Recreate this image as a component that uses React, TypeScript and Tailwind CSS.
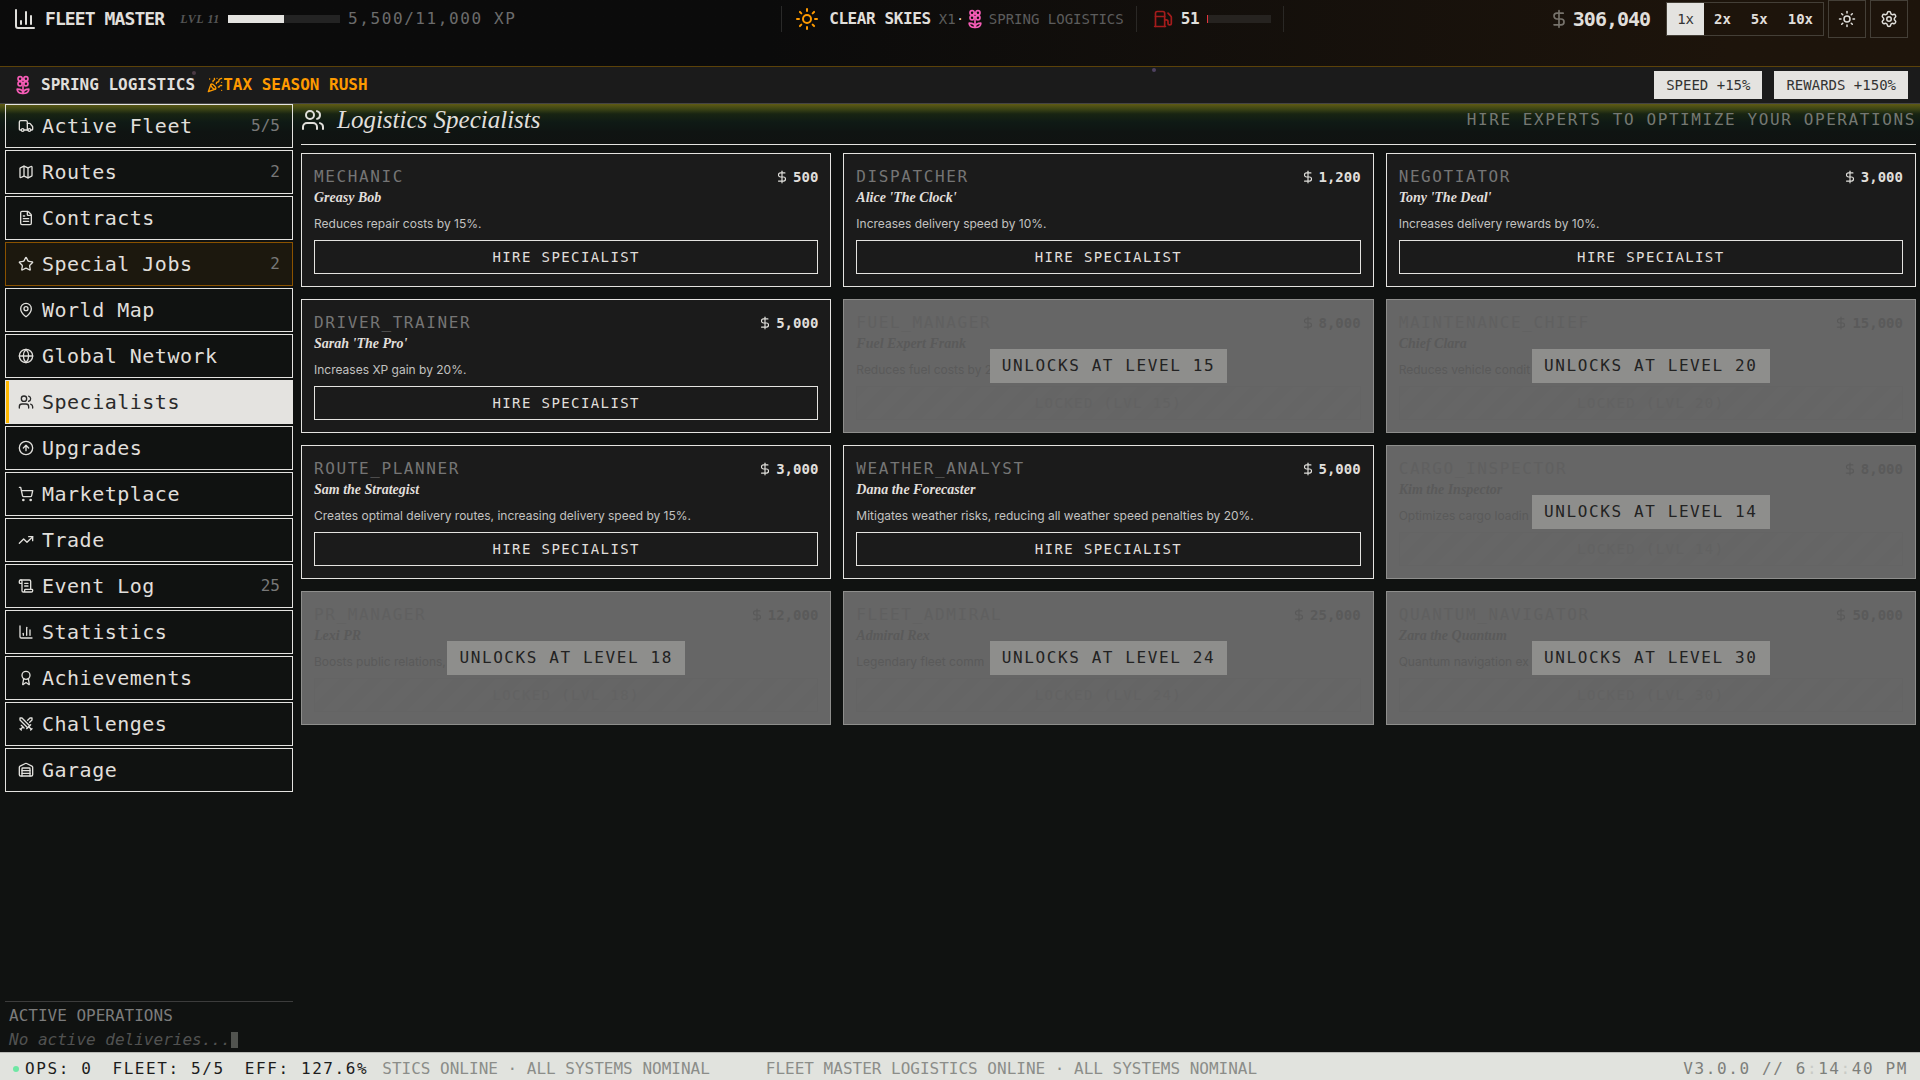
import {
    Award,
    ChartColumn,
    CircleArrowUp,
    DollarSign,
    FileText,
    Fuel,
    Globe,
    Map,
    MapPin,
    PartyPopper,
    ScrollText,
    Settings,
    ShoppingCart,
    Star,
    Sun,
    Swords,
    TrendingUp,
    Truck,
    Users,
    Warehouse,
    type LucideIcon,
} from "lucide-react";
import clsx from "clsx";

interface NavItem {
    label: string;
    icon: LucideIcon;
    count?: string;
    tone?: "special" | "active";
}

interface Specialist {
    role: string;
    name: string;
    cost: string;
    effect: string;
    unlockLevel?: number;
}

const NAV_ITEMS: NavItem[] = [
    { label: "Active Fleet", icon: Truck, count: "5/5" },
    { label: "Routes", icon: Map, count: "2" },
    { label: "Contracts", icon: FileText },
    { label: "Special Jobs", icon: Star, count: "2", tone: "special" },
    { label: "World Map", icon: MapPin },
    { label: "Global Network", icon: Globe },
    { label: "Specialists", icon: Users, tone: "active" },
    { label: "Upgrades", icon: CircleArrowUp },
    { label: "Marketplace", icon: ShoppingCart },
    { label: "Trade", icon: TrendingUp },
    { label: "Event Log", icon: ScrollText, count: "25" },
    { label: "Statistics", icon: ChartColumn },
    { label: "Achievements", icon: Award },
    { label: "Challenges", icon: Swords },
    { label: "Garage", icon: Warehouse },
];

const SPECIALISTS: Specialist[] = [
    { role: "MECHANIC", name: "Greasy Bob", cost: "500", effect: "Reduces repair costs by 15%." },
    { role: "DISPATCHER", name: "Alice 'The Clock'", cost: "1,200", effect: "Increases delivery speed by 10%." },
    { role: "NEGOTIATOR", name: "Tony 'The Deal'", cost: "3,000", effect: "Increases delivery rewards by 10%." },
    { role: "DRIVER_TRAINER", name: "Sarah 'The Pro'", cost: "5,000", effect: "Increases XP gain by 20%." },
    { role: "FUEL_MANAGER", name: "Fuel Expert Frank", cost: "8,000", effect: "Reduces fuel costs by 2", unlockLevel: 15 },
    { role: "MAINTENANCE_CHIEF", name: "Chief Clara", cost: "15,000", effect: "Reduces vehicle condit", unlockLevel: 20 },
    { role: "ROUTE_PLANNER", name: "Sam the Strategist", cost: "3,000", effect: "Creates optimal delivery routes, increasing delivery speed by 15%." },
    { role: "WEATHER_ANALYST", name: "Dana the Forecaster", cost: "5,000", effect: "Mitigates weather risks, reducing all weather speed penalties by 20%." },
    { role: "CARGO_INSPECTOR", name: "Kim the Inspector", cost: "8,000", effect: "Optimizes cargo loadin", unlockLevel: 14 },
    { role: "PR_MANAGER", name: "Lexi PR", cost: "12,000", effect: "Boosts public relations,", unlockLevel: 18 },
    { role: "FLEET_ADMIRAL", name: "Admiral Rex", cost: "25,000", effect: "Legendary fleet comm", unlockLevel: 24 },
    { role: "QUANTUM_NAVIGATOR", name: "Zara the Quantum", cost: "50,000", effect: "Quantum navigation ex", unlockLevel: 30 },
];

const SPEEDS = ["1x", "2x", "5x", "10x"];

function SpringIcon() {
    return (
        <svg
            viewBox="0 0 24 24"
            className="size-5 shrink-0 text-[#f65cb6]"
            fill="none"
            stroke="currentColor"
            strokeWidth="2"
            strokeLinecap="round"
            strokeLinejoin="round"
        >
            <circle cx="8.5" cy="4.5" r="2.5" />
            <circle cx="15.5" cy="4.5" r="2.5" />
            <circle cx="8.5" cy="10.5" r="2.5" />
            <circle cx="15.5" cy="10.5" r="2.5" />
            <circle cx="12" cy="7.5" r="2" />
            <path d="M12 13v9" />
            <path d="M12 22c-4.2 0-7-1.667-7-5 4.2 0 7 1.667 7 5Z" />
            <path d="M12 22c4.2 0 7-1.667 7-5-4.2 0-7 1.667-7 5Z" />
        </svg>
    );
}

function Header() {
    return (
        <header className="h-[67px] shrink-0 border-b border-[#5c4209] bg-linear-to-r from-[#0b0b0b] from-40% to-[#1d140b] to-90%">
            <div className="flex h-[38px] items-center justify-between pr-3 pl-[13px]">
                <div className="flex items-center">
                    <ChartColumn className="size-6" />
                    <h1 className="ml-2 text-lg font-bold tracking-tighter">FLEET MASTER</h1>
                    <span className="ml-4 font-['Liberation_Serif'] text-xs font-bold tracking-wider text-[#555] italic">LVL 11</span>
                    <div className="ml-2 h-2 w-28 bg-[#232323]">
                        <div className="h-full w-1/2 bg-[#e4e3e0]" />
                    </div>
                    <span className="ml-2 tracking-widest text-[#6c6c6c]">5,500/11,000 XP</span>
                </div>

                <div className="flex items-center">
                    <div className="flex h-[26px] items-center border-l border-[#2a2a29] pr-3 pl-[13px]">
                        <Sun className="size-6 text-[#fe9a00]" />
                        <span className="ml-[10px] font-bold tracking-tight">CLEAR SKIES</span>
                        <span className="ml-2 text-sm text-[#5c5c5c]">X1</span>
                        <span className="mx-px text-xs">·</span>
                        <SpringIcon />
                        <span className="ml-1 text-sm text-[#5c5c5c]">SPRING LOGISTICS</span>
                    </div>
                    <div className="flex h-[26px] items-center border-x border-[#2a2825] pr-3 pl-4">
                        <Fuel className="size-5 text-[#a51c1c]" />
                        <span className="ml-2 font-bold tracking-tight">51</span>
                        <div className="ml-2 h-2 w-16 bg-[#262320]">
                            <div className="h-full w-px bg-[#e5343b]" />
                        </div>
                    </div>
                </div>

                <div className="flex items-center">
                    <DollarSign className="size-5 text-[#77736c]" />
                    <span className="ml-1 text-xl font-bold tracking-tighter">306,040</span>
                    <div className="ml-4 flex border border-[#443f37]">
                        {SPEEDS.map((speed, i) => (
                            <button
                                key={speed}
                                className={clsx(
                                    "h-8 px-[10px] text-sm",
                                    i === 0 ? "bg-[#e4e3e0] text-[#333]" : "font-bold"
                                )}
                            >
                                {speed}
                            </button>
                        ))}
                    </div>
                    <button aria-label="Theme" className="ml-1 grid size-[38px] place-items-center border border-[#443f37]">
                        <Sun className="size-[18px]" />
                    </button>
                    <button aria-label="Settings" className="ml-1 grid size-[38px] place-items-center border border-[#443f37]">
                        <Settings className="size-[18px]" />
                    </button>
                </div>
            </div>
        </header>
    );
}

function SeasonBar() {
    return (
        <div className="relative flex h-[37px] shrink-0 items-center border-b border-[#444] bg-[#1b1b1b] pr-3 pl-[13px]">
            <div className="flex items-center font-bold">
                <SpringIcon />
                <span className="ml-2">SPRING LOGISTICS</span>
                <PartyPopper className="ml-3 size-4 text-[#fe9a00]" />
                <span className="text-[#fe9a00]">TAX SEASON RUSH</span>
            </div>
            <div className="ml-auto flex gap-3 text-sm text-[#333]">
                <span className="bg-[#e4e3e0] px-3 py-1">SPEED +15%</span>
                <span className="bg-[#e4e3e0] px-3 py-1">REWARDS +150%</span>
            </div>
            {/* Drifting petals */}
            <i className="absolute top-1 left-[10%] size-1 rounded-full bg-[#4b3a44]" />
            <i className="absolute top-px left-[60%] size-1 rounded-full bg-[#4e4260]" />
        </div>
    );
}

function Sidebar() {
    return (
        <aside className="flex w-72 shrink-0 flex-col">
            <nav className="flex flex-col gap-[2px]">
                {NAV_ITEMS.map(({ label, icon: Icon, count, tone }) => (
                    <button
                        key={label}
                        className={clsx(
                            "flex h-11 items-center gap-2 border px-3",
                            tone === "special" && "border-[#8a5200] bg-[#1c180e]",
                            tone === "active" && "border-[#e4e3e0] bg-[#e4e3e0] text-[#2a2a2a] shadow-[inset_3px_0_0_#ffb900]",
                            !tone && "border-[#e4e3e0]"
                        )}
                    >
                        <Icon className="size-4" />
                        <span className="text-xl tracking-wide">{label}</span>
                        {count && <span className="ml-auto text-[#787878]">{count}</span>}
                    </button>
                ))}
            </nav>
            <div className="mt-auto border-t border-[#3c3c3c] px-1 pt-[2px]">
                <h3 className="text-[#7c7c7c]">ACTIVE OPERATIONS</h3>
                <p className="flex items-center text-[#525252] italic">
                    No active deliveries...
                    <i className="h-4 w-[7px] bg-[#51534f]" />
                </p>
            </div>
        </aside>
    );
}

function SpecialistCard({ role, name, cost, effect, unlockLevel }: Specialist) {
    const locked = unlockLevel !== undefined;

    return (
        <article
            className={clsx(
                "relative border p-3",
                locked ? "border-[#8e8e8c] bg-[#666] text-[#5a5a5a]" : "border-[#e4e3e0] bg-[#1b1b1b]"
            )}
        >
            <div className="flex items-start justify-between">
                <h3 className={clsx("leading-[22px] tracking-widest", locked ? "text-[#606060]" : "text-[#757575]")}>{role}</h3>
                <span className="flex items-center gap-1 text-sm leading-[22px] font-bold">
                    <DollarSign className="size-[14px]" />
                    {cost}
                </span>
            </div>
            <p className="font-['Liberation_Serif'] text-sm font-bold italic">{name}</p>
            <p className={clsx("mt-2 font-['Inter'] text-xs", !locked && "text-[#c2c2c0]")}>{effect}</p>
            <button
                disabled={locked}
                className={clsx(
                    "mt-2 h-[34px] w-full border text-sm tracking-widest",
                    locked
                        ? "border-[#646464] bg-[repeating-linear-gradient(-45deg,#666_0_10px,#656565_10px_20px)] text-[#626262]"
                        : "border-[#e4e3e0]"
                )}
            >
                {locked ? `LOCKED (LVL ${unlockLevel})` : "HIRE SPECIALIST"}
            </button>
            {locked && (
                <div className="absolute inset-0 grid place-items-center">
                    <span className="bg-[#8e8e8c] px-3 py-[5px] tracking-widest text-[#222]">
                        UNLOCKS AT LEVEL {unlockLevel}
                    </span>
                </div>
            )}
        </article>
    );
}

function Footer() {
    return (
        <footer className="flex h-7 shrink-0 items-center border-t border-[#b9bab6] bg-[#e1e3de] pt-[5px] pr-3 pl-[13px] text-[#1c1c1c]">
            <i className="size-[6px] rounded-full bg-[#6ee7a4]" />
            <div className="ml-[6px] flex gap-5 tracking-widest">
                <span>OPS: 0</span>
                <span>FLEET: 5/5</span>
                <span>EFF: 127.6%</span>
            </div>
            <div className="ml-[14px] flex min-w-0 flex-1 gap-14 overflow-hidden whitespace-nowrap text-[#8b8d89]">
                <span>STICS ONLINE · ALL SYSTEMS NOMINAL</span>
                <span>FLEET MASTER LOGISTICS ONLINE · ALL SYSTEMS NOMINAL</span>
            </div>
            <span className="tracking-widest text-[#7d7f7b]">
                V3.0.0 // 6<span className="text-[#c9cbc6]">:</span>14<span className="text-[#c9cbc6]">:</span>40 PM
            </span>
        </footer>
    );
}

export default function App() {
    return (
        <div className="flex h-screen flex-col overflow-hidden bg-[#101211] font-['DejaVu_Sans_Mono',monospace] text-base text-[#e0dfdb]">
            <Header />
            <SeasonBar />
            <div className="flex min-h-0 flex-1 gap-2 bg-[linear-gradient(#5f5b14_0px,#3c4415_5px,#182412_10px,#0f1a15_18px,#0f1412_28px,#101211_44px)] pr-1 pl-[5px]">
                <Sidebar />
                <main className="min-w-0 flex-1">
                    <div className="mb-2 flex items-start justify-between border-b border-[#e4e3e0] pb-2">
                        <h2 className="flex items-center gap-3 font-['Liberation_Serif'] text-[25px] leading-8 italic">
                            <Users className="size-6" />
                            Logistics Specialists
                        </h2>
                        <p className="pt-1 tracking-widest text-[#757872]">HIRE EXPERTS TO OPTIMIZE YOUR OPERATIONS</p>
                    </div>
                    <div className="grid grid-cols-3 gap-3">
                        {SPECIALISTS.map((specialist) => (
                            <SpecialistCard key={specialist.role} {...specialist} />
                        ))}
                    </div>
                </main>
            </div>
            <Footer />
        </div>
    );
}
